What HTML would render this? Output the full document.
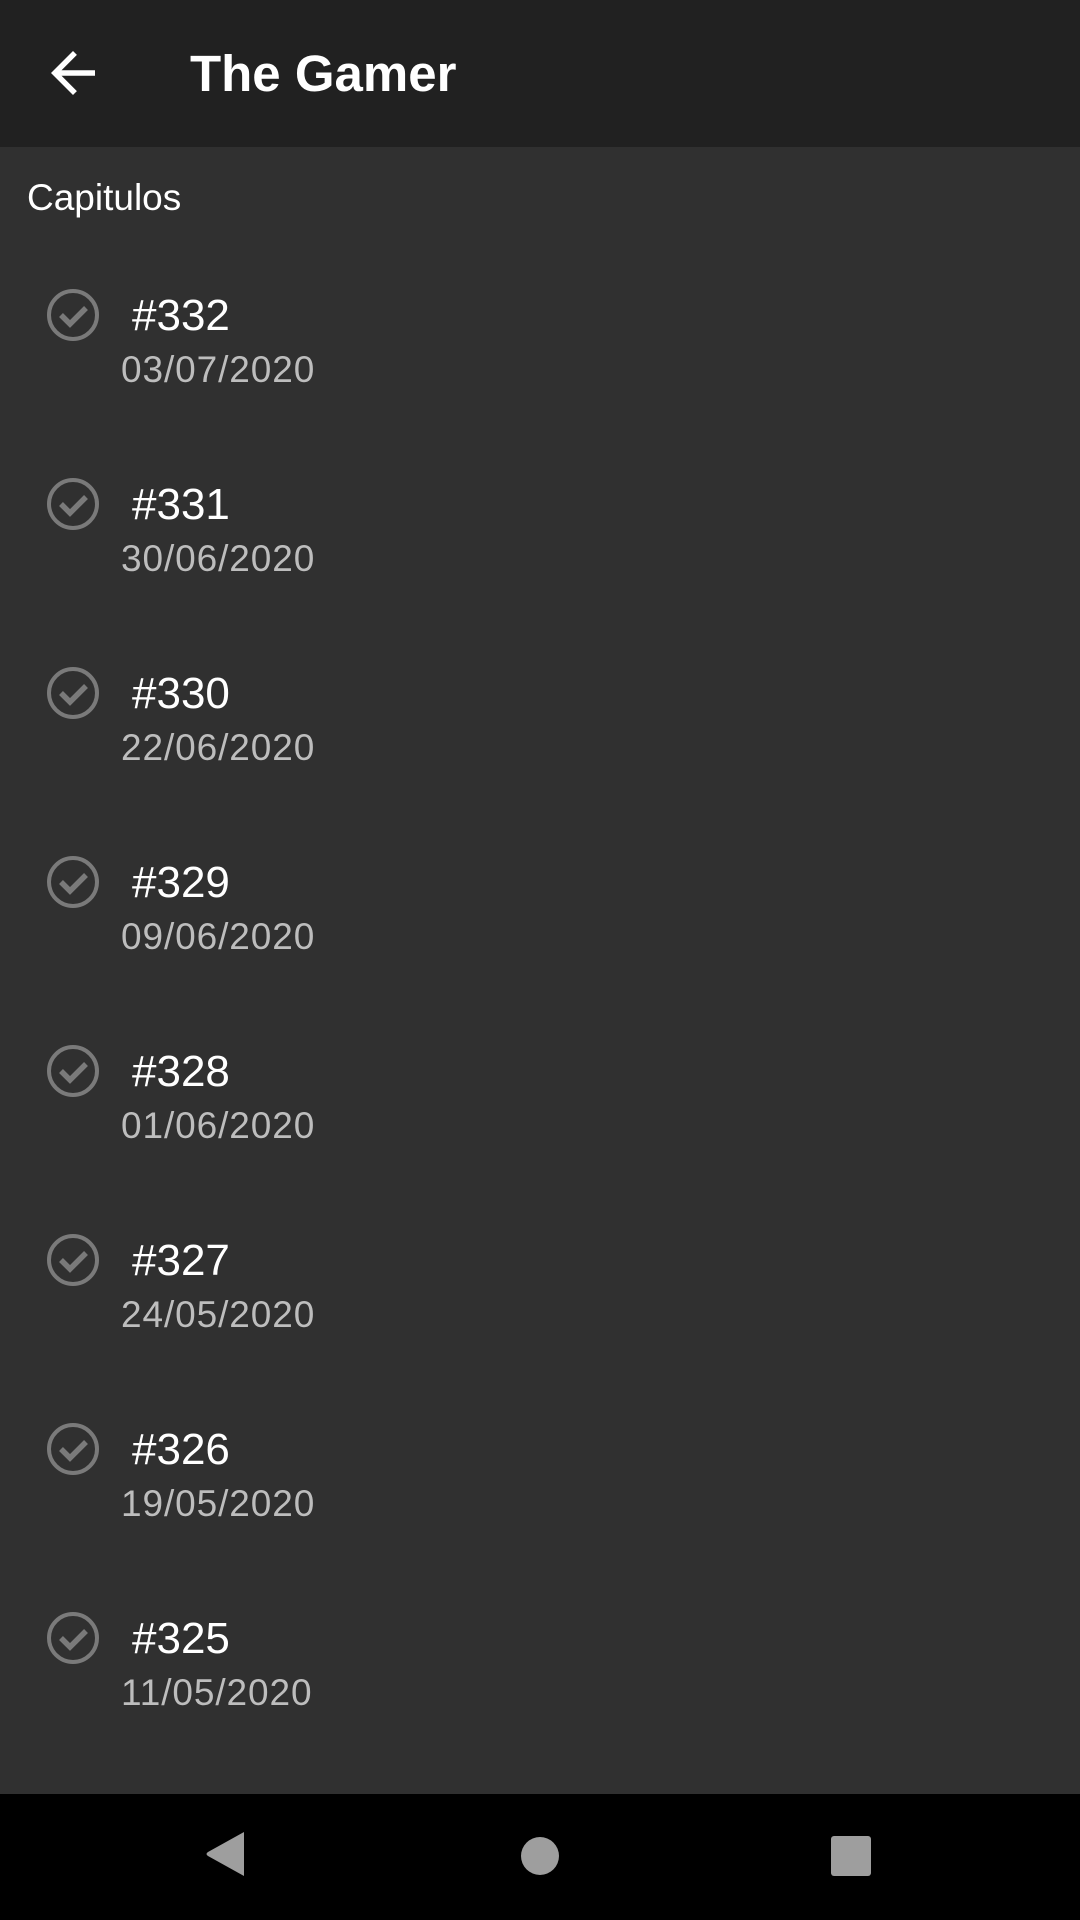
<!DOCTYPE html>
<html><head><meta charset="utf-8"><style>
body{margin:0;width:1080px;height:1920px;background:#303030;font-family:"Liberation Sans",Roboto,sans-serif;position:relative;overflow:hidden}
.hdr{position:absolute;left:0;top:0;width:1080px;height:147px;background:#212121}
.title{position:absolute;left:190px;top:41px;font-size:51px;font-weight:bold;color:#fff;line-height:66px}
.cap{position:absolute;left:27px;top:175px;font-size:37px;color:#fff;line-height:46px}
.item{position:absolute;left:0;width:1080px;height:150px}
.item svg{position:absolute;left:45px;top:0}
.num{position:absolute;left:132px;top:1px;font-size:44px;color:#fff;line-height:54px}
.date{position:absolute;left:121px;top:59px;font-size:37px;letter-spacing:0.9px;color:#bdbdbd;line-height:46px}
.nav{position:absolute;left:0;top:1794px;width:1080px;height:126px;background:#000}
</style></head><body>
<div class="hdr">
<svg style="position:absolute;left:40px;top:40px" width="66" height="66" viewBox="0 0 24 24"><path d="M20 11H7.83l5.59-5.59L12 4l-8 8 8 8 1.41-1.41L7.83 13H20v-2z" fill="#fff"/></svg>
<div class="title">The Gamer</div>
</div>
<div class="cap">Capitulos</div>

<div class="item" style="top:288px"><svg width="56" height="56" viewBox="0 0 56 56"><circle cx="28" cy="27" r="24" fill="none" stroke="#7a7a7a" stroke-width="4"/><path d="M16 27l9 9 16-16" fill="none" stroke="#7a7a7a" stroke-width="5.5"/></svg><div class="num">#332</div><div class="date">03/07/2020</div></div>
<div class="item" style="top:477px"><svg width="56" height="56" viewBox="0 0 56 56"><circle cx="28" cy="27" r="24" fill="none" stroke="#7a7a7a" stroke-width="4"/><path d="M16 27l9 9 16-16" fill="none" stroke="#7a7a7a" stroke-width="5.5"/></svg><div class="num">#331</div><div class="date">30/06/2020</div></div>
<div class="item" style="top:666px"><svg width="56" height="56" viewBox="0 0 56 56"><circle cx="28" cy="27" r="24" fill="none" stroke="#7a7a7a" stroke-width="4"/><path d="M16 27l9 9 16-16" fill="none" stroke="#7a7a7a" stroke-width="5.5"/></svg><div class="num">#330</div><div class="date">22/06/2020</div></div>
<div class="item" style="top:855px"><svg width="56" height="56" viewBox="0 0 56 56"><circle cx="28" cy="27" r="24" fill="none" stroke="#7a7a7a" stroke-width="4"/><path d="M16 27l9 9 16-16" fill="none" stroke="#7a7a7a" stroke-width="5.5"/></svg><div class="num">#329</div><div class="date">09/06/2020</div></div>
<div class="item" style="top:1044px"><svg width="56" height="56" viewBox="0 0 56 56"><circle cx="28" cy="27" r="24" fill="none" stroke="#7a7a7a" stroke-width="4"/><path d="M16 27l9 9 16-16" fill="none" stroke="#7a7a7a" stroke-width="5.5"/></svg><div class="num">#328</div><div class="date">01/06/2020</div></div>
<div class="item" style="top:1233px"><svg width="56" height="56" viewBox="0 0 56 56"><circle cx="28" cy="27" r="24" fill="none" stroke="#7a7a7a" stroke-width="4"/><path d="M16 27l9 9 16-16" fill="none" stroke="#7a7a7a" stroke-width="5.5"/></svg><div class="num">#327</div><div class="date">24/05/2020</div></div>
<div class="item" style="top:1422px"><svg width="56" height="56" viewBox="0 0 56 56"><circle cx="28" cy="27" r="24" fill="none" stroke="#7a7a7a" stroke-width="4"/><path d="M16 27l9 9 16-16" fill="none" stroke="#7a7a7a" stroke-width="5.5"/></svg><div class="num">#326</div><div class="date">19/05/2020</div></div>
<div class="item" style="top:1611px"><svg width="56" height="56" viewBox="0 0 56 56"><circle cx="28" cy="27" r="24" fill="none" stroke="#7a7a7a" stroke-width="4"/><path d="M16 27l9 9 16-16" fill="none" stroke="#7a7a7a" stroke-width="5.5"/></svg><div class="num">#325</div><div class="date">11/05/2020</div></div>

<div class="nav">
<svg style="position:absolute;left:200px;top:36px" width="48" height="48" viewBox="0 0 48 48"><path d="M44 2 L44 46 L8 26 Q5 24 8 22 Z" fill="#9e9e9e"/></svg>
<div style="position:absolute;left:521px;top:43px;width:38px;height:38px;border-radius:50%;background:#9e9e9e"></div>
<div style="position:absolute;left:831px;top:42px;width:40px;height:40px;border-radius:3px;background:#9e9e9e"></div>
</div>
</body></html>
